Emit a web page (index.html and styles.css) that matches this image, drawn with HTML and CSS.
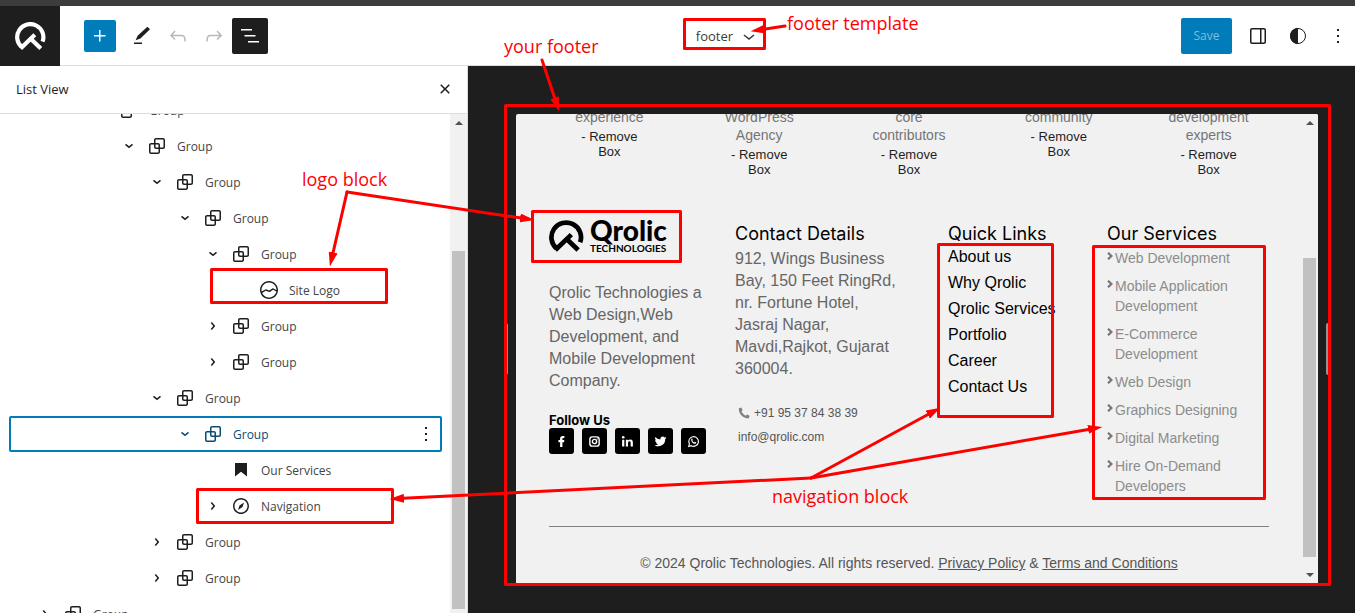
FILE: index.html
```html
<!DOCTYPE html>
<html lang="en">
<head>
<meta charset="utf-8">
<title>Site Editor – footer</title>
<link rel="stylesheet" href="styles.css">
</head>
<body>
<svg class="sprite" aria-hidden="true">
  <symbol id="group" viewBox="0 0 24 24"><path d="M18 4h-7c-1.1 0-2 .9-2 2v3H6c-1.1 0-2 .9-2 2v7c0 1.1.9 2 2 2h7c1.1 0 2-.9 2-2v-3h3c1.1 0 2-.9 2-2V6c0-1.1-.9-2-2-2zm-4.5 14c0 .3-.2.5-.5.5H6c-.3 0-.5-.2-.5-.5v-7c0-.3.2-.5.5-.5h3V13c0 1.1.9 2 2 2h2.5v3zm0-4.5H11c-.3 0-.5-.2-.5-.5v-2.5H13c.3 0 .5.2.5.5v2.5zm5-.5c0 .3-.2.5-.5.5h-3V11c0-1.1-.9-2-2-2h-2.5V6c0-.3.2-.5.5-.5h7c.3 0 .5.2.5.5v7z"/></symbol>
  <symbol id="down" viewBox="0 0 24 24"><path d="m15.99 10.889-3.988 3.418-3.988-3.418.976-1.14 3.012 2.582 3.012-2.581.976 1.139Z"/></symbol>
  <symbol id="right" viewBox="0 0 24 24"><path d="M10.862 8.04 14.28 12.03l-3.418 3.988-1.139-.977 2.582-3.012-2.582-3.012 1.139-.976Z"/></symbol>
  <symbol id="more" viewBox="0 0 24 24"><path d="M13 19h-2v-2h2v2zm0-6h-2v-2h2v2zm0-6h-2V5h2v2z"/></symbol>
  <symbol id="mark" viewBox="0 0 31 28"><g fill="none" stroke="currentColor" stroke-width="4.2"><path d="M6.6 25 A13.1 13.1 0 1 1 27.6 19.6"/><path d="M5.6 26.4 19.8 12.8"/><path d="M15.4 16.4 25.8 26.4"/></g></symbol>
  <symbol id="caret" viewBox="0 0 6 8"><path d="M1 .8 4.4 4 1 7.2" fill="none" stroke="currentColor" stroke-width="2.2"/></symbol>
</svg>

<div class="app">
  <header class="topbar">
    <a class="home" href="#" aria-label="Dashboard"><svg width="31" height="28"><use href="#mark"/></svg></a>
    <div class="tools">
      <button class="add" aria-label="Add block"><svg class="icon" viewBox="0 0 24 24"><path d="M11 12.5v5h1.5v-5h5V11h-5V6H11v5H6v1.5h5z"/></svg></button>
      <button class="tool" aria-label="Edit"><svg class="icon" viewBox="0 0 24 24"><path d="m20 5.2-2.6-2.4-9.8 9-2 4.4 4.8-1.6L20 5.2ZM12 18.5H4V20h8v-1.5Z"/></svg></button>
      <button class="tool tool-off" aria-label="Undo"><svg class="icon" viewBox="0 0 24 24"><path d="M18.3 11.7c-.6-.6-1.4-.9-2.3-.9H6.7l2.9-3.3-1.1-1-4.5 5L8.5 16l1-1-2.7-2.7H16c.5 0 .9.2 1.3.5 1 1 1 3.4 1 4.5v.3h1.5v-.2c0-1.5 0-4.3-1.5-5.7z"/></svg></button>
      <button class="tool tool-off" aria-label="Redo"><svg class="icon" viewBox="0 0 24 24"><path d="M15.6 6.5l-1.1 1 2.9 3.3H8c-.9 0-1.7.3-2.3.9-1.4 1.5-1.4 4.2-1.4 5.6v.2h1.5v-.3c0-1.1 0-3.5 1-4.5.3-.3.7-.5 1.3-.5h9.2L14.5 15l1.1 1.1 4.6-4.6-4.6-5z"/></svg></button>
      <button class="tool tool-on" aria-label="List View"><svg class="icon" viewBox="0 0 24 24"><path d="M3 5h11v1.5H3V5Zm3.5 6h11v1.5h-11V11ZM21 17H10v1.5h11V17Z"/></svg></button>
    </div>
    <button class="template">footer <svg class="icon" viewBox="0 0 24 24"><path d="M17.5 11.6L12 16l-5.5-4.4.9-1.2L12 14l4.5-3.6 1 1.2z"/></svg></button>
    <div class="actions">
      <button class="save">Save</button>
      <button class="tool" aria-label="Settings"><svg class="icon" viewBox="0 0 24 24"><path d="M18 4H6c-1.1 0-2 .9-2 2v12c0 1.1.9 2 2 2h12c1.1 0 2-.9 2-2V6c0-1.1-.9-2-2-2zm-4 14.5H6c-.3 0-.5-.2-.5-.5V6c0-.3.2-.5.5-.5h8v13zm4.5-.5c0 .3-.2.5-.5.5h-2.5v-13H18c.3 0 .5.2.5.5v12z"/></svg></button>
      <button class="tool" aria-label="Styles"><svg class="icon" viewBox="0 0 24 24"><circle cx="12" cy="12" r="7.5" fill="none" stroke="currentColor"/><path d="M12 4a8 8 0 0 0 0 16z"/></svg></button>
      <button class="tool" aria-label="Options"><svg class="icon"><use href="#more"/></svg></button>
    </div>
  </header>

  <div class="body">
    <aside class="panel">
      <div class="panel-head"><h2>List View</h2><button class="close" aria-label="Close"><svg class="icon" viewBox="0 0 24 24"><path d="M12 13.06l3.712 3.713 1.061-1.06L13.061 12l3.712-3.712-1.06-1.06L12 10.938 8.288 7.227l-1.061 1.06L10.939 12l-3.712 3.712 1.06 1.061L12 13.061z"/></svg></button></div>
      <div class="panel-body">
        <ul class="tree">
          <li class="row l2"><svg class="icon"><use href="#down"/></svg><svg class="icon"><use href="#group"/></svg><a href="#">Group</a></li>
          <li class="row l3"><svg class="icon"><use href="#down"/></svg><svg class="icon"><use href="#group"/></svg><a href="#">Group</a></li>
          <li class="row l4"><svg class="icon"><use href="#down"/></svg><svg class="icon"><use href="#group"/></svg><a href="#">Group</a></li>
          <li class="row l5"><svg class="icon"><use href="#down"/></svg><svg class="icon"><use href="#group"/></svg><a href="#">Group</a></li>
          <li class="row l6"><svg class="icon"><use href="#down"/></svg><svg class="icon"><use href="#group"/></svg><a href="#">Group</a></li>
          <li class="row l7"><span class="icon"></span><svg class="icon" viewBox="0 0 24 24"><path d="M12 3c-5 0-9 4-9 9s4 9 9 9 9-4 9-9-4-9-9-9zm0 1.5c4.1 0 7.5 3.4 7.5 7.5v.1c-1.4-.8-3.3-1.7-3.4-1.8-.2-.1-.5-.1-.8.1l-2.9 2.1L9 11.3c-.2-.1-.4 0-.6.1l-3.7 2.2c-.1-.5-.2-1-.2-1.5 0-4.2 3.4-7.6 7.5-7.6zm0 15c-3.1 0-5.7-1.9-6.9-4.5l3.7-2.2 3.5 1.2c.2.1.5 0 .7-.1l2.9-2.1c.8.4 2.5 1.2 3.5 1.9-.9 3.3-3.9 5.8-7.4 5.8z"/></svg><a href="#">Site Logo</a></li>
          <li class="row l6"><svg class="icon"><use href="#right"/></svg><svg class="icon"><use href="#group"/></svg><a href="#">Group</a></li>
          <li class="row l6"><svg class="icon"><use href="#right"/></svg><svg class="icon"><use href="#group"/></svg><a href="#">Group</a></li>
          <li class="row l4"><svg class="icon"><use href="#down"/></svg><svg class="icon"><use href="#group"/></svg><a href="#">Group</a></li>
          <li class="row l5 selected"><svg class="icon"><use href="#down"/></svg><svg class="icon"><use href="#group"/></svg><a href="#">Group</a><button class="row-more" aria-label="Options"><svg class="icon"><use href="#more"/></svg></button></li>
          <li class="row l6"><span class="icon"></span><svg class="icon" viewBox="0 0 24 24"><path d="M6 5v13.6l6-4.75 6 4.75V5H6Z"/></svg><a href="#">Our Services</a></li>
          <li class="row l6"><svg class="icon"><use href="#right"/></svg><svg class="icon" viewBox="0 0 24 24"><path d="M12 4c-4.4 0-8 3.6-8 8s3.6 8 8 8 8-3.6 8-8-3.6-8-8-8zm0 14.5c-3.6 0-6.5-2.9-6.5-6.5S8.4 5.5 12 5.5s6.5 2.9 6.5 6.5-2.9 6.5-6.5 6.5zM9 16l4.5-3L15 8.4l-4.5 3L9 16z"/></svg><a href="#">Navigation</a></li>
          <li class="row l4"><svg class="icon"><use href="#right"/></svg><svg class="icon"><use href="#group"/></svg><a href="#">Group</a></li>
          <li class="row l4"><svg class="icon"><use href="#right"/></svg><svg class="icon"><use href="#group"/></svg><a href="#">Group</a></li>
          <li class="row l1"><svg class="icon"><use href="#right"/></svg><svg class="icon"><use href="#group"/></svg><a href="#">Group</a></li>
        </ul>
        <div class="scroll scroll-panel"><span class="arrow-up"></span><span class="thumb"></span></div>
      </div>
    </aside>

    <main class="canvas">
      <div class="frame">
        <footer class="site">
          <div class="stats">
            <div><p>experience</p><a href="#">- Remove<br>Box</a></div>
            <div><p>WordPress<br>Agency</p><a href="#">- Remove<br>Box</a></div>
            <div><p>core<br>contributors</p><a href="#">- Remove<br>Box</a></div>
            <div><p>community</p><a href="#">- Remove<br>Box</a></div>
            <div><p>development<br>experts</p><a href="#">- Remove<br>Box</a></div>
          </div>
          <div class="columns">
            <section>
              <div class="brand"><svg width="35" height="32"><use href="#mark"/></svg><div><span class="brand-name">Qrolic</span><span class="brand-sub">TECHNOLOGIES</span></div></div>
              <p class="about">Qrolic Technologies a Web Design,Web Development, and Mobile Development Company.</p>
              <h4>Follow Us</h4>
              <div class="social">
                <a href="#" aria-label="Facebook"><svg viewBox="0 0 14 14"><path d="M5.5 13V7.7H3.7V5.5h1.8V4c0-1.9 1-3 2.9-3h1.7v2.1H9c-.8 0-1 .4-1 1v1.4h2l-.3 2.2H8V13z"/></svg></a>
                <a href="#" aria-label="Instagram"><svg viewBox="0 0 14 14"><g fill="none" stroke="currentColor" stroke-width="1.5"><rect x="2" y="2" width="10" height="10" rx="2.7"/><circle cx="7" cy="7" r="2.3"/></g><circle cx="9.9" cy="4.2" r=".7"/></svg></a>
                <a href="#" aria-label="LinkedIn"><svg viewBox="0 0 14 14"><circle cx="2.4" cy="2.5" r="1.4"/><path d="M1.2 5h2.4v7.5H1.2zM5.2 5h2.3v1c.5-.8 1.3-1.2 2.4-1.2 2.2 0 2.9 1.3 2.9 3.5v4.2h-2.4V8.7c0-1.2-.3-1.9-1.3-1.9-1.1 0-1.5.8-1.5 2v3.7H5.2z"/></svg></a>
                <a href="#" aria-label="Twitter"><svg viewBox="0 0 24 24"><path d="M23 5.1a9 9 0 0 1-2.6.7 4.5 4.5 0 0 0 2-2.5 9 9 0 0 1-2.9 1.1 4.5 4.5 0 0 0-7.7 4.1A12.8 12.8 0 0 1 2.5 3.8a4.5 4.5 0 0 0 1.4 6 4.5 4.5 0 0 1-2-.6 4.5 4.5 0 0 0 3.6 4.5 4.5 4.5 0 0 1-2 .1 4.5 4.5 0 0 0 4.2 3.1A9 9 0 0 1 1 18.8a12.8 12.8 0 0 0 19.7-11.4A9 9 0 0 0 23 5.1z"/></svg></a>
                <a href="#" aria-label="WhatsApp"><svg viewBox="0 0 14 14"><path d="M1.8 12.3l.8-2.8a5.2 5.2 0 1 1 2 2z" fill="none" stroke="currentColor" stroke-width="1.2"/><path d="M4.6 4.3c.5-.7 1-.5 1.2 0l.4 1-.5.8c.5.9 1.1 1.5 2 1.9l.8-.7 1.4.7c.1 1.1-.9 1.6-1.8 1.5C6 9 4.1 6.5 4.6 4.3z"/></svg></a>
              </div>
            </section>
            <section>
              <h3>Contact Details</h3>
              <p class="address">912, Wings Business Bay, 150 Feet RingRd, nr. Fortune Hotel, Jasraj Nagar, Mavdi,Rajkot, Gujarat 360004.</p>
              <p class="contact"><svg viewBox="0 0 12 12" width="12" height="12"><path d="M3.2.5.8 1.2C.6 7 5.2 11.5 10.9 11.3l.7-2.5-2.6-1.4-1.2 1.3C6 7.9 4.4 6.3 3.5 4.4L4.6 3z"/></svg><a href="#">+91 95 37 84 38 39</a></p>
              <p class="contact"><a href="#">info@qrolic.com</a></p>
            </section>
            <section>
              <h3>Quick Links</h3>
              <ul class="quick">
                <li><a href="#">About us</a></li><li><a href="#">Why Qrolic</a></li><li><a href="#">Qrolic Services</a></li><li><a href="#">Portfolio</a></li><li><a href="#">Career</a></li><li><a href="#">Contact Us</a></li>
              </ul>
            </section>
            <section>
              <h3>Our Services</h3>
              <ul class="services">
                <li><svg><use href="#caret"/></svg><a href="#">Web Development</a></li>
                <li><svg><use href="#caret"/></svg><a href="#">Mobile Application Development</a></li>
                <li><svg><use href="#caret"/></svg><a href="#">E-Commerce Development</a></li>
                <li><svg><use href="#caret"/></svg><a href="#">Web Design</a></li>
                <li><svg><use href="#caret"/></svg><a href="#">Graphics Designing</a></li>
                <li><svg><use href="#caret"/></svg><a href="#">Digital Marketing</a></li>
                <li><svg><use href="#caret"/></svg><a href="#">Hire On-Demand Developers</a></li>
              </ul>
            </section>
          </div>
          <p class="legal">© 2024 Qrolic Technologies. All rights reserved. <a href="#">Privacy Policy</a> &amp; <a href="#">Terms and Conditions</a></p>
        </footer>
        <div class="scroll scroll-frame"><span class="arrow-up"></span><span class="thumb"></span><span class="arrow-down"></span></div>
      </div>
    </main>
  </div>
</div>

<div class="notes">
  <svg width="1355" height="613" aria-hidden="true">
    <defs><marker id="tip" markerUnits="userSpaceOnUse" markerWidth="15" markerHeight="9" refX="6" refY="4.5" orient="auto"><path d="M0 0 14.5 4.5 0 9z" fill="red"/></marker></defs>
    <g fill="none" stroke="red" stroke-width="3" stroke-linejoin="round" stroke-linecap="round">
      <rect x="684.5" y="19.5" width="80" height="29"/>
      <rect x="505.5" y="105.5" width="824" height="479"/>
      <rect x="211.5" y="269.5" width="175" height="33"/>
      <rect x="197.5" y="489.5" width="195" height="33"/>
      <rect x="532.5" y="211.5" width="148" height="50"/>
      <rect x="938.5" y="244.5" width="114" height="172"/>
      <rect x="1093.5" y="246.5" width="171" height="252"/>
      <path d="M785 26 759 30" marker-end="url(#tip)"/>
      <path d="M542 60 556.5 103.4" marker-end="url(#tip)"/>
      <path d="M347 192 331.8 258.2" marker-end="url(#tip)"/>
      <path d="M347 192 526 218.8" marker-end="url(#tip)"/>
      <path d="M811 478 398 498.6" marker-end="url(#tip)"/>
      <path d="M811 478 933 411.8" marker-end="url(#tip)"/>
      <path d="M811 478 1094 428.4" marker-end="url(#tip)"/>
    </g>
  </svg>
  <span class="note note-template">footer template</span>
  <span class="note note-footer">your footer</span>
  <span class="note note-logo">logo block</span>
  <span class="note note-nav">navigation block</span>
</div>
</body>
</html>
```
FILE: styles.css
```css
* { box-sizing: border-box; }
body { margin: 0; font-family: "Open Sans", "Noto Sans", sans-serif; font-size: 12px; color: #1e1e1e; overflow: hidden; }
h2, h3, h4, p, ul { margin: 0; padding: 0; font-weight: 400; }
ul { list-style: none; }
a { color: inherit; text-decoration: none; }
button { font: inherit; color: inherit; background: none; border: 0; padding: 0; display: flex; align-items: center; justify-content: center; }
svg { fill: currentColor; display: block; flex: none; }
.sprite { position: absolute; width: 0; height: 0; }
.icon { width: 24px; height: 24px; flex: none; }

.app { display: flex; flex-direction: column; height: 100vh; border-top: 6px solid #3c3c3c; }
.topbar { display: flex; align-items: center; justify-content: space-between; height: 60px; flex: none; background: #fff; border-bottom: 1px solid #ddd; }
.home { display: flex; align-items: center; justify-content: center; width: 60px; height: 60px; background: #1e1e1e; color: #fff; flex: none; align-self: flex-start; }
.tools { display: flex; align-items: center; margin-left: 24px; }
.add { width: 32px; height: 32px; margin-right: 8px; border-radius: 2px; background: #007cba; color: #fff; }
.tool { width: 36px; height: 36px; border-radius: 2px; }
.tool-off { color: #b8b8b8; }
.tool-on { background: #1e1e1e; color: #fff; }
.template { gap: 4px; margin: 0 auto; padding-left: 8px; font-size: 13px; color: #3c3c3c; }
.actions { display: flex; align-items: center; gap: 4px; margin-right: -1px; }
.save { width: 51px; height: 36px; margin-right: 4px; border-radius: 2px; background: #007cba; color: #7cbcdc; font-size: 12px; }

.body { display: flex; flex: 1; min-height: 0; }
.panel { display: flex; flex-direction: column; width: 468px; flex: none; border-right: 1px solid #ddd; background: #fff; }
.panel-head { display: flex; align-items: center; justify-content: space-between; height: 48px; flex: none; padding: 0 10px 1px 16px; border-bottom: 1px solid #ddd; }
.panel-head h2 { font-size: 13px; }
.panel-body { display: flex; flex: 1; min-height: 0; overflow: hidden; }
.tree { flex: 1; margin-top: -22px; padding: 0 8px 0 9px; }
.row { display: flex; align-items: center; height: 36px; color: #1e1e1e; }
.row a { margin-left: 8px; color: #444; }
.row .icon + .icon { margin-left: 4px; }
.l1 { padding-left: 24px; }
.l2 { padding-left: 80px; }
.l3 { padding-left: 108px; }
.l4 { padding-left: 136px; }
.l5 { padding-left: 164px; }
.l6 { padding-left: 192px; }
.l7 { padding-left: 220px; }
.selected, .selected a { color: #0a4b78; }
.selected { box-shadow: inset 0 0 0 2px #007cba; border-radius: 2px; }
.row-more { margin-left: auto; margin-right: 4px; color: #1e1e1e; }

.scroll { display: flex; flex-direction: column; align-items: center; width: 17px; flex: none; background: #f1f1f1; }
.thumb { width: 13px; background: #c1c1c1; }
.arrow-up, .arrow-down { border: 4px solid transparent; width: 8px; height: 4px; }
.arrow-up { border-top: 0; border-bottom-color: #505050; margin-top: 7px; }
.arrow-down { border-bottom: 0; border-top-color: #505050; }
.scroll-panel .thumb { flex: 1; margin: 126px 0 4px; }
.scroll-frame .thumb { flex: 1; margin: 133px 0 16px; }
.scroll-frame .arrow-down { margin-bottom: 6px; }

.canvas { position: relative; flex: 1; min-width: 0; display: flex; padding: 48px 37px 30px 48px; background: #1e1e1e; }
.canvas::before, .canvas::after { content: ""; position: absolute; top: 257px; width: 4px; height: 52px; border-radius: 2px; background: #949494; }
.canvas::before { left: 36px; }
.canvas::after { right: 25px; }
.frame { display: flex; flex: 1; min-width: 0; overflow: hidden; border-radius: 2px 2px 0 0; background: #f1f1f1; font-family: "Liberation Sans", Arial, sans-serif; }
.site { display: flex; flex-direction: column; justify-content: flex-end; flex: 1; min-width: 0; padding: 0 32px 10px 33px; color: #666; }
.stats { display: grid; grid-template-columns: repeat(5, 1fr); gap: 29px; margin-bottom: 42px; text-align: center; font-size: 14px; line-height: 18px; color: #757575; }
.stats a { display: block; margin-top: 3px; font-size: 13px; line-height: 15px; color: #1e1e1e; }
.columns { display: grid; grid-template-columns: 160fr 187fr 133fr 162fr; gap: 26px; padding-bottom: 30px; border-bottom: 1px solid #808080; }
.columns section { min-width: 0; }
h3 { margin-top: 3px; font: 400 18px/23px Inter, sans-serif; color: #000; white-space: nowrap; }
h4 { font: 700 13px/16px Inter, sans-serif; color: #000; }
.brand { display: flex; gap: 6px; height: 34px; align-items: center; color: #000; font-family: Lato, sans-serif; }
.brand-name, .brand-sub { display: block; }
.brand-name { font-size: 28px; line-height: 24px; font-weight: 900; }
.brand-sub { font-size: 10px; line-height: 12px; font-weight: 700; }
.about, .address { font-size: 16px; line-height: 22px; }
.about { margin: 29px 0 20px; }
.social { display: flex; gap: 8px; }
.social a { display: flex; align-items: center; justify-content: center; width: 25px; height: 26px; border-radius: 3px; background: #000; color: #fff; }
.social svg { width: 13px; height: 13px; }
.address { max-width: 164px; margin: 3px 0 25px; }
.contact { display: flex; align-items: center; gap: 4px; margin: 0 0 8px 3px; font-size: 12px; line-height: 16px; color: #555; }
.contact svg { fill: #808080; }
.quick { display: grid; gap: 4px; margin-top: 1px; font-size: 16px; line-height: 22px; color: #000; white-space: nowrap; }
.services { display: grid; gap: 8px; margin-top: 3px; font-size: 14px; line-height: 20px; color: #8c8c8c; }
.services li { display: flex; gap: 2px; }
.services svg { width: 6px; height: 8px; margin-top: 4px; color: #757575; }
.legal { margin-top: 26px; font-size: 14px; line-height: 20px; text-align: center; color: #555; }
.legal a { text-decoration: underline; }

.notes { position: absolute; top: 0; left: 0; pointer-events: none; }
.note { position: absolute; font: 400 18px/24px "Open Sans", sans-serif; color: #f00; white-space: nowrap; }
.note-template { left: 787px; top: 11px; }
.note-footer { left: 504px; top: 34px; }
.note-logo { left: 302px; top: 167px; }
.note-nav { left: 772px; top: 484px; }
```
